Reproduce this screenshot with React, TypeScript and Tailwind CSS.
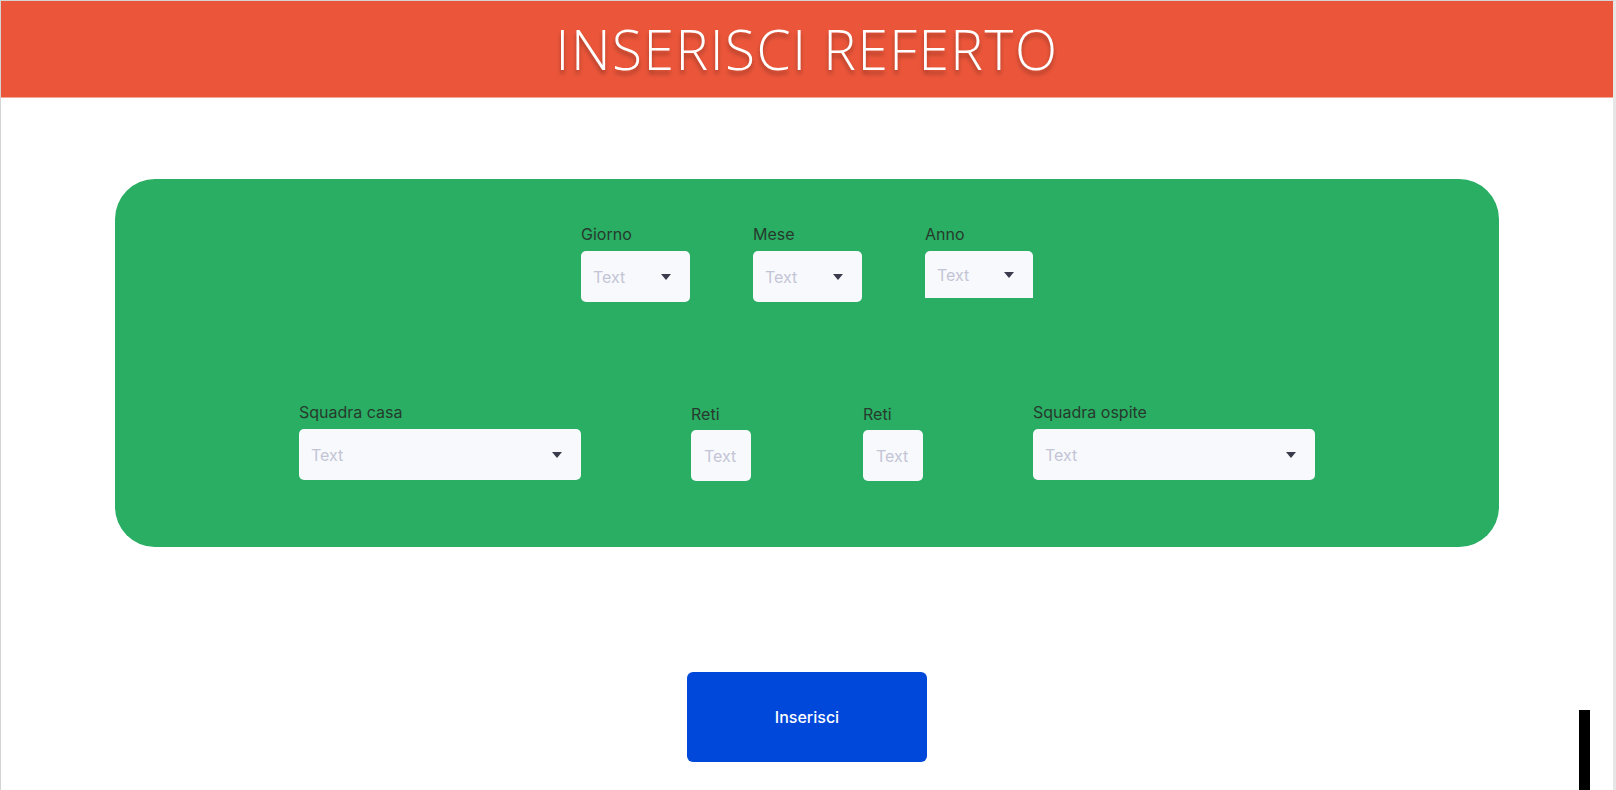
import React from "react";

const font = { fontFamily: "Inter, 'Noto Sans', sans-serif" };

function Caret() {
  return (
    <svg width="10" height="6" viewBox="0 0 10 6" className="shrink-0">
      <path d="M0 0 L10 0 L5 6 Z" fill="#3a3b4c" />
    </svg>
  );
}

function SelectField({
  label,
  width,
  flatBottom,
}: {
  label: string;
  width: string;
  flatBottom?: boolean;
}) {
  return (
    <div className="flex flex-col gap-[5px]">
      <span className="text-[16px] leading-6 text-[#263a2d]">{label}</span>
      <div
        className={`${width} ${
          flatBottom ? "h-[47px] rounded-t-[5px]" : "h-[51px] rounded-[5px]"
        } flex items-center justify-between bg-[#f8f9fc] pl-3 pr-[19px]`}
      >
        <span className="text-[16px] text-[#c3c5d6]">Text</span>
        <Caret />
      </div>
    </div>
  );
}

function GoalField() {
  return (
    <div className="flex flex-col gap-[4px] pt-[2px]">
      <span className="text-[16px] leading-6 text-[#263a2d]">Reti</span>
      <div className="flex h-[51px] w-[60px] items-center rounded-[5px] bg-[#f8f9fc] pl-[13px]">
        <span className="text-[16px] text-[#c3c5d6]">Text</span>
      </div>
    </div>
  );
}

export default function App() {
  return (
    <div
      className="relative h-[790px] w-full overflow-hidden border-t border-l border-r-[3px] border-t-[#d4d4d4] border-l-[#d4d4d4] border-r-[#e6e6e6] bg-white"
      style={font}
    >
      <header className="flex h-[97px] items-center justify-center border-b border-[#f2a898] bg-[#eb563a]">
        <h1
          className="text-[55px] font-light tracking-[1.5px] text-white [text-shadow:0_4px_4px_rgba(0,0,0,0.3)]"
          style={{ fontFamily: "'Open Sans', sans-serif" }}
        >
          INSERISCI REFERTO
        </h1>
      </header>

      <main className="flex flex-col items-center">
        <section className="mt-[81px] flex w-[1384px] flex-col items-center rounded-[40px] bg-[#29ae63] pt-[43px] pb-[66px]">
          <div className="flex items-start gap-[63px]">
            <SelectField label="Giorno" width="w-[109px]" />
            <SelectField label="Mese" width="w-[109px]" />
            <SelectField label="Anno" width="w-[108px]" flatBottom />
          </div>

          <div className="mt-[98px] flex items-start gap-[110px]">
            <SelectField label="Squadra casa" width="w-[282px]" />
            <div className="flex items-start gap-[112px]">
              <GoalField />
              <GoalField />
            </div>
            <SelectField label="Squadra ospite" width="w-[282px]" />
          </div>
        </section>

        <button
          type="button"
          className="mt-[125px] h-[90px] w-[240px] rounded-[6px] bg-[#0048da] text-[16px] font-medium text-white"
        >
          Inserisci
        </button>
      </main>

      <div className="absolute top-[709px] right-[23px] h-[81px] w-[11px] bg-black" />
    </div>
  );
}
